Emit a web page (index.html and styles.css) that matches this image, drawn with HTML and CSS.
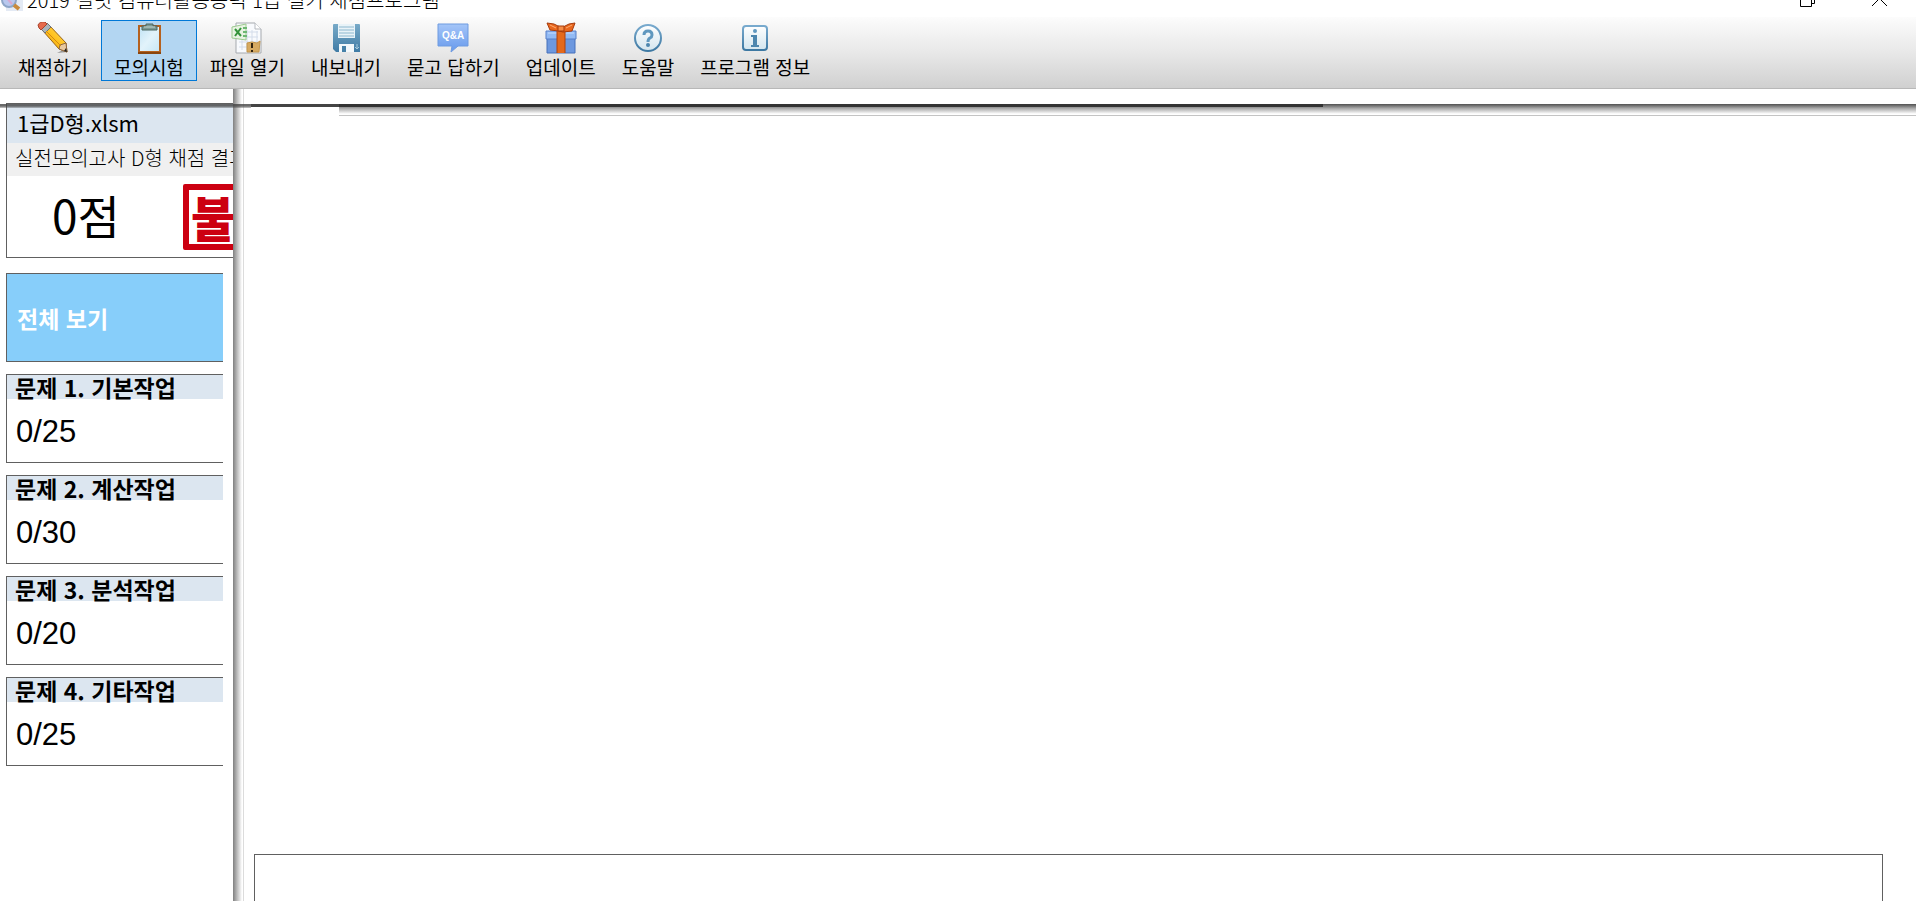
FILE: index.html
```html
<!DOCTYPE html>
<html lang="ko">
<head>
<meta charset="utf-8">
<title>2019 길벗 컴퓨터활용능력 1급 실기 채점프로그램</title>
<link rel="stylesheet" href="styles.css">
</head>
<body>
<header class="titlebar">
  <svg class="app-icon" width="24" height="24" viewBox="0 0 24 24"><rect x="6" y="1" width="17" height="22" fill="#e4eaf4"/><circle cx="9" cy="12" r="7" fill="#b9c8ee" stroke="#8ea6c8" stroke-width="2"/><path d="M5 8l7 8" stroke="#d9a9d0" stroke-width="2"/><path d="M14 17l5 4" stroke="#c98a3c" stroke-width="4"/></svg>
  <h1 class="app-title">2019 길벗 컴퓨터활용능력 1급 실기 채점프로그램</h1>
  <button class="window-button" aria-label="이전 크기로"><svg width="16" height="16" viewBox="0 0 16 16" fill="none" stroke="#000"><path d="M.5 4.500h11v11H.5zM3.500 4V1.500h11v11H12"/></svg></button>
  <button class="window-button" aria-label="닫기"><svg width="16" height="16" viewBox="0 0 16 16" fill="none" stroke="#000"><path d="M0 0l15 15M15 0L0 15"/></svg></button>
</header>
<nav class="toolbar">
  <button class="tool">
    <svg width="32" height="32" viewBox="0 0 32 32"><defs><linearGradient id="pen" x1="0" y1="1" x2="1" y2="0"><stop offset="0" stop-color="#e08a00"/><stop offset=".5" stop-color="#ffc21e"/><stop offset="1" stop-color="#ffe06a"/></linearGradient></defs><path d="M20 31l11-1-3-3z" fill="#999"/><path d="M6 9l6-6 17 18 1 9-8-3z" fill="url(#pen)" stroke="#9b6414"/><path d="M22 27l1-4 3-1 3-1 1 9z" fill="#e8c9a0" stroke="#8c6640"/><path d="M27 29l3 1-1-4z" fill="#222"/><path d="M4 7l6-6 4 4-6 6z" fill="#a9b4bb" stroke="#6c7479"/><path d="M1 3Q3-1 8 0l2 2-6 6-2-2z" fill="#e66a4c" stroke="#a9442c"/><path d="M9 9l15 15" stroke="#d58a10"/></svg>
    <span>채점하기</span>
  </button>
  <button class="tool tool-active" aria-pressed="true">
    <svg width="32" height="32" viewBox="0 0 32 32"><defs><linearGradient id="sheet" x1="0" y1="0" x2="1" y2="1"><stop offset="0" stop-color="#bfe2f4"/><stop offset=".5" stop-color="#e2f3fb"/><stop offset="1" stop-color="#c6e6f6"/></linearGradient></defs><rect x="6" y="4" width="21" height="26" fill="url(#sheet)" stroke="#b5611f" stroke-width="2"/><path d="M5 31h23" stroke="#8a460f" stroke-width="2"/><path d="M9 4h4V2h7v2h4v4H9z" fill="#7d9a94" stroke="#4b6660"/><path d="M11 5h11" stroke="#c3d4d0"/></svg>
    <span>모의시험</span>
  </button>
  <button class="tool">
    <svg width="32" height="32" viewBox="0 0 32 32"><path d="M5 1h19l6 6v24H5z" fill="#f8fafd" stroke="#a5a9ae"/><path d="M24 1v6h6" fill="#fff" stroke="#b5b9be"/><path d="M10 10h17M10 15h17M8 20h19M8 25h19M11 18v10M16 8v20M21 8v20M26 9v18" stroke="#d3dcea"/><path d="M1 5l14-3v16L1 16z" fill="#e8f3e2" stroke="#9cca90"/><path d="M4 7l6 7M10 6l-6 8" stroke="#34933a" stroke-width="2"/><path d="M12 6h4M12 10h4M12 14h4" stroke="#6db872" stroke-width="2"/><path d="M16 21l5-1 5 1 3-2-1 11H16z" fill="#d6aa62" stroke="#c2944a"/><path d="M21 21v5M21 28v2" stroke="#332510" stroke-width="2"/></svg>
    <span>파일 열기</span>
  </button>
  <button class="tool">
    <svg width="32" height="32" viewBox="0 0 32 32"><defs><linearGradient id="blue" x1="0" y1="0" x2="0" y2="1"><stop offset="0" stop-color="#78aac8"/><stop offset="1" stop-color="#3f7ba5"/></linearGradient></defs><path d="M3 3q0-1 1-1h25q1 0 1 1v27H6l-3-3z" fill="url(#blue)"/><path d="M8 2h17v14H8z" fill="#e9f3f8"/><path d="M9 5h15M9 8h15M9 11h15M9 14h15" stroke="#8db8cf"/><path d="M9 22h15v8H9z" fill="#f2f8fb"/><path d="M12 24h4v6h-4z" fill="#4681a8"/><path d="M27 22v5M25 25l2 2 2-2" stroke="#a4c9dc" fill="none"/></svg>
    <span>내보내기</span>
  </button>
  <button class="tool">
    <svg width="32" height="32" viewBox="0 0 32 32"><defs><linearGradient id="bubble" x1="0" y1="0" x2="0" y2="1"><stop offset="0" stop-color="#a4c5f8"/><stop offset="1" stop-color="#6699ec"/></linearGradient></defs><path d="M1 2h30v22H21l-7 6 1-6H1z" fill="url(#bubble)" stroke="#6f9be0"/><text x="16" y="17" text-anchor="middle" class="bubble-text">Q&amp;A</text></svg>
    <span>묻고 답하기</span>
  </button>
  <button class="tool">
    <svg width="32" height="32" viewBox="0 0 32 32"><path d="M2 15h28v16H2z" fill="#6d98df" stroke="#4670ba"/><path d="M1 9h30v8H1z" fill="#92baf4" stroke="#567fc8"/><path d="M3 11h26" stroke="#c3dbff"/><path d="M12 9h8v22h-8z" fill="#e4691c"/><path d="M12 9v22M20 9v22" stroke="#ad410c"/><path d="M14 9L5 8 2 1l7 1 6 3h3l6-3 6-1-3 8-9 1z" fill="#e9671d" stroke="#a53b0d"/><path d="M13 4h6v5h-6z" fill="#f58b45" stroke="#a53b0d"/><path d="M5 3l6 3M27 3l-6 3" stroke="#ffab72"/></svg>
    <span>업데이트</span>
  </button>
  <button class="tool">
    <svg width="32" height="32" viewBox="0 0 32 32"><defs><linearGradient id="pale" x1="0" y1="0" x2="0" y2="1"><stop offset="0" stop-color="#fff"/><stop offset="1" stop-color="#d3e5ee"/></linearGradient><linearGradient id="rim" x1="0" y1="0" x2="0" y2="1"><stop offset="0" stop-color="#78aace"/><stop offset="1" stop-color="#3d78a2"/></linearGradient></defs><circle cx="16" cy="16" r="13" fill="url(#pale)" stroke="url(#rim)" stroke-width="2"/><path d="M12 13q0-4 4-4t4 4q0 2-2 3t-2 4" fill="none" stroke="#5f98bf" stroke-width="3"/><circle cx="16" cy="23" r="2" fill="#4c86ae"/></svg>
    <span>도움말</span>
  </button>
  <button class="tool">
    <svg width="32" height="32" viewBox="0 0 32 32"><rect x="4" y="4" width="24" height="24" rx="3" fill="url(#pale)" stroke="url(#rim)" stroke-width="2"/><circle cx="16" cy="9" r="2" fill="#5f98bf"/><path d="M12 13h6v10h2v2h-8v-2h2v-8h-2z" fill="#4c86ae"/></svg>
    <span>프로그램 정보</span>
  </button>
</nav>
<div class="workspace">
  <div class="top-edge" aria-hidden="true"><div class="edge-left"></div><div class="edge-mid"></div><div class="edge-shade"></div></div>
  <aside class="sidebar">
    <section class="result">
      <h2 class="file-name">1급D형.xlsm</h2>
      <p class="exam-name">실전모의고사 D형 채점 결과</p>
      <div class="score">
        <strong class="score-value">0점</strong>
        <div class="stamp">불</div>
      </div>
    </section>
    <button class="view-all">전체 보기</button>
    <section class="task"><h3 class="task-title">문제 1. 기본작업</h3><p class="task-score">0/25</p></section>
    <section class="task"><h3 class="task-title">문제 2. 계산작업</h3><p class="task-score">0/30</p></section>
    <section class="task"><h3 class="task-title">문제 3. 분석작업</h3><p class="task-score">0/20</p></section>
    <section class="task"><h3 class="task-title">문제 4. 기타작업</h3><p class="task-score">0/25</p></section>
  </aside>
  <div class="splitter"></div>
  <main class="content"><div class="detail"></div></main>
</div>
</body>
</html>
```
FILE: styles.css
```css
* { box-sizing: border-box; }
body {
  margin: 0;
  height: 100vh;
  display: flex;
  flex-direction: column;
  overflow: hidden;
  background: #fff;
  color: #000;
  font-family: "Noto Sans CJK KR", sans-serif;
  font-size: 19px;
  font-weight: 400;
}
h1, h2, h3, p { margin: 0; font-weight: inherit; }
button { font: inherit; color: inherit; padding: 0; border: 0; background: none; }

.titlebar {
  height: 17px;
  flex: none;
  display: flex;
  align-items: flex-end;
  overflow: hidden;
}
.app-icon { flex: none; margin-bottom: 5px; }
.app-title { flex: 1; margin-left: 3px; margin-bottom: 5px; font-size: 20px; font-weight: 300; line-height: 24px; }
.window-button { height: 16px; line-height: 0; margin-bottom: 10px; margin-right: 56px; }
.window-button + .window-button { margin-right: 28px; }

.toolbar {
  flex: none;
  display: flex;
  padding: 3px 5px 7px;
  background: linear-gradient(#fcfcfc, #e8e8e8 50%, #d0d0d0);
  border-bottom: 1px solid #b8b8b8;
}
.tool {
  display: flex;
  flex-direction: column;
  align-items: center;
  padding: 1px 12px;
  border: 1px solid transparent;
  line-height: 25px;
  white-space: nowrap;
}
.tool-active { background: #b3d6f2; border-color: #0078d7; }
.bubble-text { font: bold 10px "Liberation Sans", sans-serif; fill: #fff; }

.workspace { flex: 1; min-height: 0; display: flex; position: relative; }
.top-edge {
  position: absolute;
  top: 15px;
  left: 0;
  right: 0;
  display: flex;
  z-index: 1;
}
.edge-left { width: 251px; height: 4px; background: linear-gradient(#444c, #444c 50%, #4444); }
.edge-mid { width: 88px; height: 3px; background: #444; }
.edge-shade {
  flex: 1;
  height: 12px;
  background:
    linear-gradient(90deg, #333, #333) 0 0 / 984px 3px no-repeat,
    linear-gradient(#505050, #aaa 40%, #fff 90%);
  border-bottom: 1px solid #c4c4c4;
}

.sidebar { width: 233px; flex: none; padding: 14px 0 0 6px; overflow: hidden; }
.result { border: 1px solid #606060; border-right: 0; margin-bottom: 15px; white-space: nowrap; }
.file-name { padding: 0 10px 3px; font-size: 22px; line-height: 36px; background: #dce6f0; }
.exam-name { padding: 0 8px 3px; font-size: 20px; font-weight: 300; line-height: 30px; background: #f0f0f0; }
.score { display: flex; align-items: center; height: 81px; padding-left: 45px; }
.score-value { width: 131px; flex: none; padding-bottom: 5px; font-size: 46px; font-weight: 400; line-height: 60px; }
.stamp {
  width: 66px;
  height: 66px;
  flex: none;
  border: 6px solid #cc0011;
  border-radius: 2px;
  color: #cc0011;
  font-size: 48px;
  font-weight: 900;
  line-height: 52px;
  padding-left: 2px;
}
.view-all, .task {
  display: block;
  width: 217px;
  height: 89px;
  margin-bottom: 12px;
  border: 1px solid #606060;
  border-right: 0;
}
.view-all { padding: 0 10px; background: #87cefa; color: #fff; font-size: 23px; font-weight: 700; text-align: left; }
.task-title {
  height: 24px;
  padding: 0 8px;
  background: #dce6f0;
  font-size: 23px;
  font-weight: 700;
  line-height: 24px;
}
.task-score {
  padding: 0 9px;
  font-family: "Liberation Sans", sans-serif;
  font-size: 31px;
  line-height: 66px;
}

.splitter {
  width: 11px;
  flex: none;
  background: linear-gradient(90deg, #808080, #c8c8c8 50%, #fff 90%);
  border-right: 1px solid #dcdcdc;
}
.content { flex: 1; display: flex; align-items: flex-end; padding: 0 33px 0 10px; }
.detail { flex: 1; height: 47px; border: 1px solid #606060; border-bottom: 0; }
```
